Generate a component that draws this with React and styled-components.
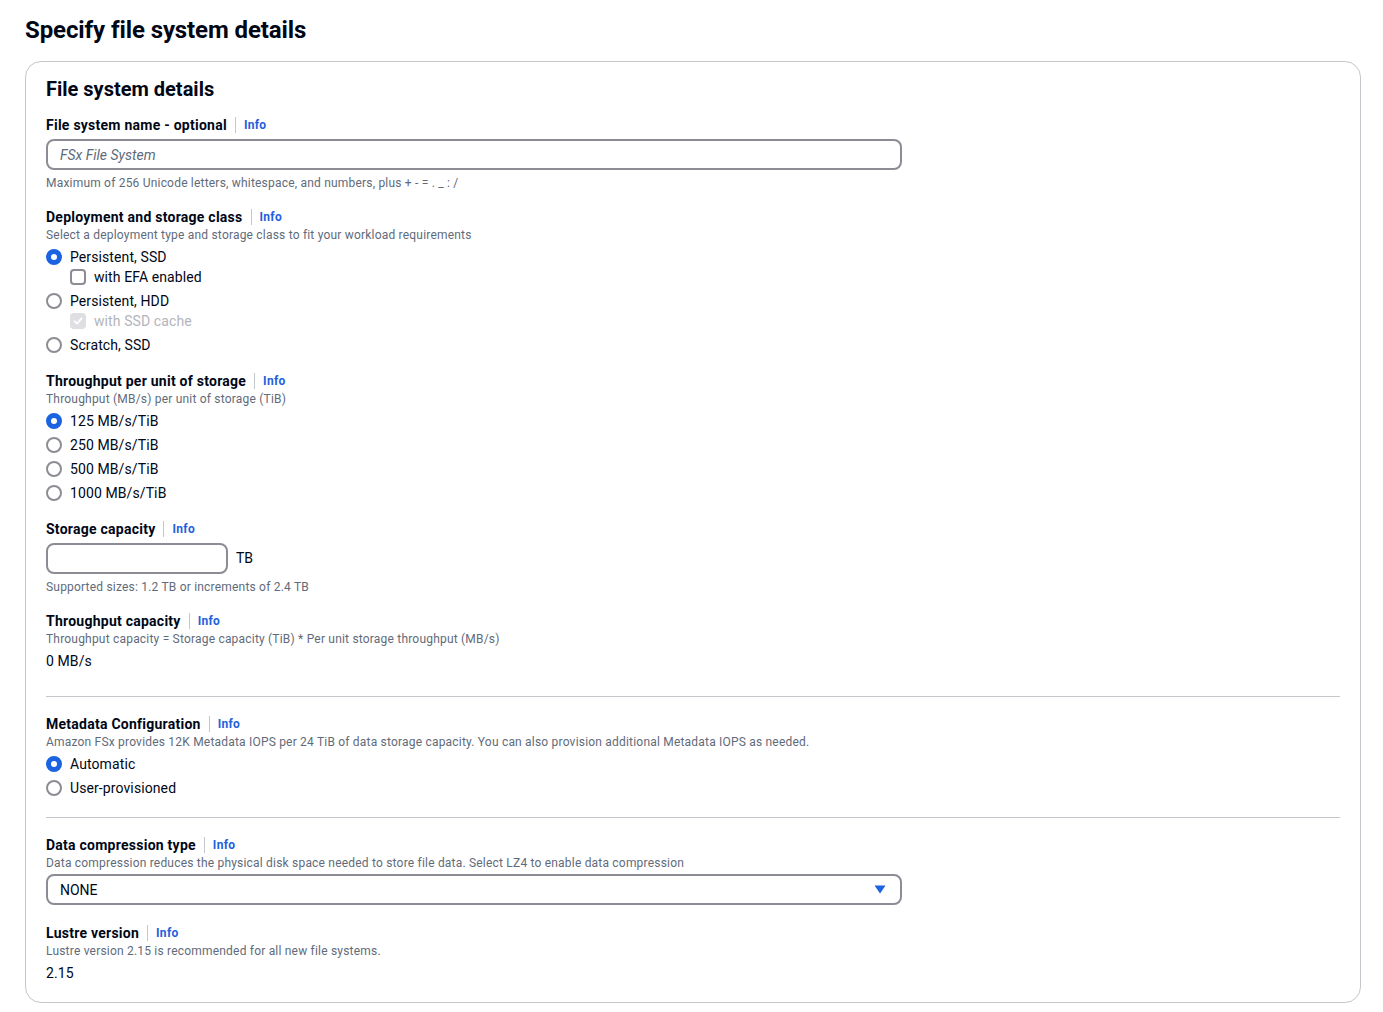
import React from 'react';
import styled, { createGlobalStyle } from 'styled-components';

const GlobalStyle = createGlobalStyle`
  body {
    margin: 0;
    background: #ffffff;
    color: #000716;
    font-family: Roboto, "Noto Sans", Arial, sans-serif;
  }
`;

const Page = styled.div`
  padding: 14px 22px 9px 25px;
`;

const PageTitle = styled.h1`
  margin: 0 0 15px;
  font-size: 24px;
  line-height: 32px;
  font-weight: 700;
  letter-spacing: -0.1px;
`;

const Card = styled.section`
  border: 1px solid #c6c6cd;
  border-radius: 16px;
  padding: 15px 20px 19px;
  display: flex;
  flex-direction: column;
  gap: 17px;
`;

const CardTitle = styled.h2`
  margin: 0 0 -2px;
  font-size: 20px;
  line-height: 24px;
  font-weight: 700;
`;

const Field = styled.div`
  display: flex;
  flex-direction: column;
`;

const LabelRow = styled.div`
  display: flex;
  align-items: center;
  height: 18px;
`;

const Label = styled.span`
  font-size: 14px;
  font-weight: 700;
  letter-spacing: 0.25px;
`;

const InfoLink = styled.a`
  margin-left: 8px;
  padding-left: 8px;
  border-left: 1px solid #c6c6cd;
  font-size: 12px;
  font-weight: 700;
  line-height: 16px;
  color: #1f5fde;
  text-decoration: none;
  letter-spacing: 0.3px;
`;

const Description = styled.div`
  font-size: 12px;
  line-height: 16px;
  color: #5f6b7a;
  letter-spacing: 0.2px;
  margin-top: ${(p) => (p.$top === undefined ? 1 : p.$top)}px;
`;

const TextInput = styled.input`
  box-sizing: border-box;
  width: ${(p) => p.$width}px;
  height: 31px;
  margin-top: 5px;
  padding: 0 12px;
  border: 2px solid #8c8c94;
  border-radius: 8px;
  font-family: inherit;
  font-size: 14px;
  color: #000716;
  outline: none;
  &::placeholder {
    color: #5f6b7a;
    font-style: italic;
  }
`;

const InputRow = styled.div`
  display: flex;
  align-items: center;
  gap: 8px;
  font-size: 14px;
`;

const Unit = styled.span`
  margin-top: 3px;
`;

const Options = styled.div`
  display: flex;
  flex-direction: column;
  gap: 4px;
  margin-top: 4px;
`;

const OptionGroup = styled.div`
  display: flex;
  flex-direction: column;
`;

const OptionRow = styled.label`
  display: flex;
  align-items: center;
  gap: 8px;
  height: 20px;
  font-size: 14px;
  letter-spacing: 0.1px;
  padding-left: ${(p) => (p.$nested ? 24 : 0)}px;
  color: ${(p) => (p.$disabled ? '#b4b4bb' : '#000716')};
`;

const RadioDot = styled.span`
  box-sizing: border-box;
  width: 16px;
  height: 16px;
  border-radius: 50%;
  flex-shrink: 0;
  border: ${(p) => (p.$checked ? '5px solid #1b63e0' : '2px solid #8c8c94')};
  background: #ffffff;
`;

const CheckBox = styled.span`
  box-sizing: border-box;
  width: 16px;
  height: 16px;
  border-radius: 4px;
  flex-shrink: 0;
  display: flex;
  align-items: center;
  justify-content: center;
  border: ${(p) => (p.$disabled ? 'none' : '2px solid #8c8c94')};
  background: ${(p) => (p.$disabled ? '#dedee3' : '#ffffff')};
`;

const Value = styled.div`
  font-size: 14px;
  line-height: 20px;
  margin-top: 4px;
  letter-spacing: 0.1px;
`;

const Divider = styled.hr`
  margin: ${(p) => p.$top}px 0 1px;
  border: none;
  border-top: 1px solid #c6c6cd;
`;

const Select = styled.div`
  box-sizing: border-box;
  width: 856px;
  height: 31px;
  margin: 3px 0 2px;
  padding: 0 14px 0 12px;
  border: 2px solid #8c8c94;
  border-radius: 8px;
  display: flex;
  align-items: center;
  justify-content: space-between;
  font-size: 14px;
`;

const Radio = ({ checked, children }) => (
  <OptionRow>
    <RadioDot $checked={checked} />
    {children}
  </OptionRow>
);

const FieldLabel = ({ children }) => (
  <LabelRow>
    <Label>{children}</Label>
    <InfoLink href="#">Info</InfoLink>
  </LabelRow>
);

export default function App() {
  return (
    <Page>
      <GlobalStyle />
      <PageTitle>Specify file system details</PageTitle>
      <Card>
        <CardTitle>File system details</CardTitle>

        <Field>
          <FieldLabel>File system name - optional</FieldLabel>
          <TextInput $width={856} placeholder="FSx File System" />
          <Description $top={5}>
            Maximum of 256 Unicode letters, whitespace, and numbers, plus + - = . _ : /
          </Description>
        </Field>

        <Field>
          <FieldLabel>Deployment and storage class</FieldLabel>
          <Description>Select a deployment type and storage class to fit your workload requirements</Description>
          <Options>
            <OptionGroup>
              <Radio checked>Persistent, SSD</Radio>
              <OptionRow $nested>
                <CheckBox />
                with EFA enabled
              </OptionRow>
            </OptionGroup>
            <OptionGroup>
              <Radio>Persistent, HDD</Radio>
              <OptionRow $nested $disabled>
                <CheckBox $disabled>
                  <svg width="10" height="10" viewBox="0 0 10 10">
                    <path d="M1.5 5.2 L4 7.6 L8.6 2.4" fill="none" stroke="#ffffff" strokeWidth="1.8" strokeLinecap="round" strokeLinejoin="round" />
                  </svg>
                </CheckBox>
                with SSD cache
              </OptionRow>
            </OptionGroup>
            <Radio>Scratch, SSD</Radio>
          </Options>
        </Field>

        <Field>
          <FieldLabel>Throughput per unit of storage</FieldLabel>
          <Description>Throughput (MB/s) per unit of storage (TiB)</Description>
          <Options>
            <Radio checked>125 MB/s/TiB</Radio>
            <Radio>250 MB/s/TiB</Radio>
            <Radio>500 MB/s/TiB</Radio>
            <Radio>1000 MB/s/TiB</Radio>
          </Options>
        </Field>

        <Field>
          <FieldLabel>Storage capacity</FieldLabel>
          <InputRow>
            <TextInput $width={182} />
            <Unit>TB</Unit>
          </InputRow>
          <Description $top={5}>Supported sizes: 1.2 TB or increments of 2.4 TB</Description>
        </Field>

        <Field>
          <FieldLabel>Throughput capacity</FieldLabel>
          <Description>Throughput capacity = Storage capacity (TiB) * Per unit storage throughput (MB/s)</Description>
          <Value>0 MB/s</Value>
        </Field>

        <Divider $top={8} />

        <Field>
          <FieldLabel>Metadata Configuration</FieldLabel>
          <Description>
            Amazon FSx provides 12K Metadata IOPS per 24 TiB of data storage capacity. You can also provision additional Metadata IOPS as needed.
          </Description>
          <Options>
            <Radio checked>Automatic</Radio>
            <Radio>User-provisioned</Radio>
          </Options>
        </Field>

        <Divider $top={2} />

        <Field>
          <FieldLabel>Data compression type</FieldLabel>
          <Description>
            Data compression reduces the physical disk space needed to store file data. Select LZ4 to enable data compression
          </Description>
          <Select>
            NONE
            <svg width="12" height="9" viewBox="0 0 12 9">
              <path d="M0.5 0.5 H11.5 L6 8.5 Z" fill="#1b63e0" />
            </svg>
          </Select>
        </Field>

        <Field>
          <FieldLabel>Lustre version</FieldLabel>
          <Description>Lustre version 2.15 is recommended for all new file systems.</Description>
          <Value>2.15</Value>
        </Field>
      </Card>
    </Page>
  );
}
